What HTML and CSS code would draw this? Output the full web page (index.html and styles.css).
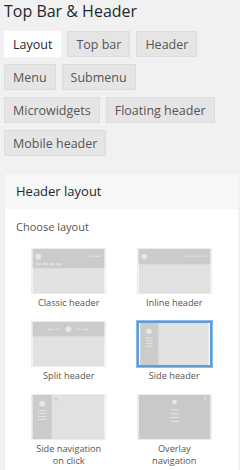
FILE: index.html
```html
<!DOCTYPE html>
<html lang="en">
<head>
<meta charset="UTF-8">
<meta name="viewport" content="width=device-width, initial-scale=1.0">
<title>Top Bar &amp; Header</title>
<link rel="stylesheet" href="styles.css">
</head>
<body>
<h2 class="page-title">Top Bar &amp; Header</h2>

<div class="tabs">
    <button class="tab active">Layout</button>
    <button class="tab">Top bar</button>
    <button class="tab">Header</button>
    <button class="tab">Menu</button>
    <button class="tab">Submenu</button>
    <button class="tab">Microwidgets</button>
    <button class="tab">Floating header</button>
    <button class="tab">Mobile header</button>
</div>

<div class="panel">
    <div class="panel-head">Header layout</div>
    <div class="panel-body">
        <div class="field-label">Choose layout</div>
        <div class="layouts">
            <div class="layout">
                <svg class="thumb" width="75" height="46" viewBox="0 0 75 46">
                    <rect width="75" height="46" fill="#e1e1e1"/>
                    <rect width="75" height="20" fill="#cbcbcb"/>
                    <circle cx="6" cy="8" r="3" fill="#e6e6e6"/>
                    <rect x="59" y="7" width="12" height="1" fill="#e6e6e6"/>
                    <rect x="4" y="15" width="5" height="1.5" fill="#e6e6e6"/>
                    <rect x="11" y="15" width="5" height="1.5" fill="#e6e6e6"/>
                    <rect x="18" y="15" width="5" height="1.5" fill="#e6e6e6"/>
                    <rect x="25" y="15" width="5" height="1.5" fill="#e6e6e6"/>
                </svg>
                <div class="layout-name">Classic header</div>
            </div>
            <div class="layout">
                <svg class="thumb" width="75" height="46" viewBox="0 0 75 46">
                    <rect width="75" height="46" fill="#e1e1e1"/>
                    <rect width="75" height="16" fill="#cbcbcb"/>
                    <circle cx="6" cy="8" r="3" fill="#e6e6e6"/>
                    <rect x="46" y="7" width="5" height="1" fill="#e6e6e6"/>
                    <rect x="53" y="7" width="5" height="1" fill="#e6e6e6"/>
                    <rect x="60" y="7" width="5" height="1" fill="#e6e6e6"/>
                    <rect x="67" y="7" width="5" height="1" fill="#e6e6e6"/>
                </svg>
                <div class="layout-name">Inline header</div>
            </div>
            <div class="layout">
                <svg class="thumb" width="75" height="46" viewBox="0 0 75 46">
                    <rect width="75" height="46" fill="#e1e1e1"/>
                    <rect width="75" height="15" fill="#cbcbcb"/>
                    <circle cx="37.5" cy="7.5" r="3" fill="#e6e6e6"/>
                    <rect x="16" y="7" width="5" height="1.2" fill="#e6e6e6"/>
                    <rect x="23" y="7" width="5" height="1.2" fill="#e6e6e6"/>
                    <rect x="46" y="7" width="5" height="1.2" fill="#e6e6e6"/>
                    <rect x="53" y="7" width="5" height="1.2" fill="#e6e6e6"/>
                </svg>
                <div class="layout-name">Split header</div>
            </div>
            <div class="layout">
                <svg class="thumb selected" width="75" height="46" viewBox="0 0 75 46">
                    <rect width="75" height="46" fill="#e1e1e1"/>
                    <rect width="20" height="46" fill="#cbcbcb"/>
                    <circle cx="9.5" cy="9" r="3" fill="#e6e6e6"/>
                    <rect x="6" y="16" width="7" height="1" fill="#e6e6e6"/>
                    <rect x="6" y="19" width="7" height="1" fill="#e6e6e6"/>
                    <rect x="6" y="22" width="7" height="1" fill="#e6e6e6"/>
                    <rect x="6" y="25" width="7" height="1" fill="#e6e6e6"/>
                </svg>
                <div class="layout-name">Side header</div>
            </div>
            <div class="layout">
                <svg class="thumb" width="75" height="46" viewBox="0 0 75 46">
                    <rect width="75" height="46" fill="#e1e1e1"/>
                    <rect width="20" height="46" fill="#cbcbcb"/>
                    <circle cx="10" cy="9" r="3" fill="#e6e6e6"/>
                    <rect x="6" y="16" width="8" height="1" fill="#e6e6e6"/>
                    <rect x="6" y="19" width="8" height="1" fill="#e6e6e6"/>
                    <rect x="6" y="22" width="8" height="1" fill="#e6e6e6"/>
                    <rect x="6" y="25" width="8" height="1" fill="#e6e6e6"/>
                    <path d="M23 3 L26 6 M26 3 L23 6" stroke="#c4c4c4" stroke-width="1"/>
                </svg>
                <div class="layout-name">Side navigation<br>on click</div>
            </div>
            <div class="layout">
                <svg class="thumb" width="75" height="46" viewBox="0 0 75 46">
                    <rect width="75" height="46" fill="#c9c9c9"/>
                    <circle cx="37.5" cy="7.5" r="2.5" fill="#e6e6e6"/>
                    <rect x="33" y="15" width="9" height="1" fill="#e6e6e6"/>
                    <rect x="33" y="19" width="9" height="1" fill="#e6e6e6"/>
                    <rect x="33" y="23" width="9" height="1" fill="#e6e6e6"/>
                    <rect x="33" y="27" width="9" height="1" fill="#e6e6e6"/>
                    <path d="M68 3 L71 6 M71 3 L68 6" stroke="#e2e2e2" stroke-width="1"/>
                </svg>
                <div class="layout-name">Overlay<br>navigation</div>
            </div>
        </div>
    </div>
</div>
</body>
</html>
```

FILE: styles.css
```css
body {
    font-family: "Open Sans", "Noto Sans", Arial, sans-serif;
    background-color: #f1f1f1;
    margin: 0;
    padding: 0 2px 0 4px;
    color: #23282d;
}
.page-title {
    font-size: 16px;
    font-weight: normal;
    line-height: 22px;
    margin: 0 0 9px 0;
}
.tabs {
    display: flex;
    flex-wrap: wrap;
    gap: 7px 6px;
    width: 226px;
}
.tab {
    font-family: inherit;
    font-size: 12.5px;
    height: 26px;
    padding: 0 8px;
    margin: 0;
    background-color: #e5e5e5;
    color: #555;
    border: 1px solid #dcdcdc;
    cursor: pointer;
}
.tab.active {
    background-color: #fff;
    border-color: #fff;
    color: #23282d;
}
.panel {
    margin: 18px 0 0 1px;
    background-color: #fff;
}
.panel-head {
    background-color: #f7f7f7;
    height: 35px;
    line-height: 35px;
    padding-left: 11px;
    font-size: 13px;
}
.panel-body {
    padding: 11px 11px 4px 11px;
}
.field-label {
    font-size: 11px;
    line-height: 14px;
    color: #555;
    margin-bottom: 14px;
}
.layouts {
    display: grid;
    grid-template-columns: 1fr 1fr;
    row-gap: 12px;
}
.layout {
    display: flex;
    flex-direction: column;
    align-items: center;
}
.thumb {
    display: block;
    box-sizing: border-box;
    border: 1px solid #ececec;
}
.thumb.selected {
    border: 2px solid #5b9dd9;
    outline: 1px solid #8fbbe6;
}
.layout-name {
    margin-top: 3px;
    font-size: 9.2px;
    line-height: 12px;
    color: #555;
    text-align: center;
}
```
